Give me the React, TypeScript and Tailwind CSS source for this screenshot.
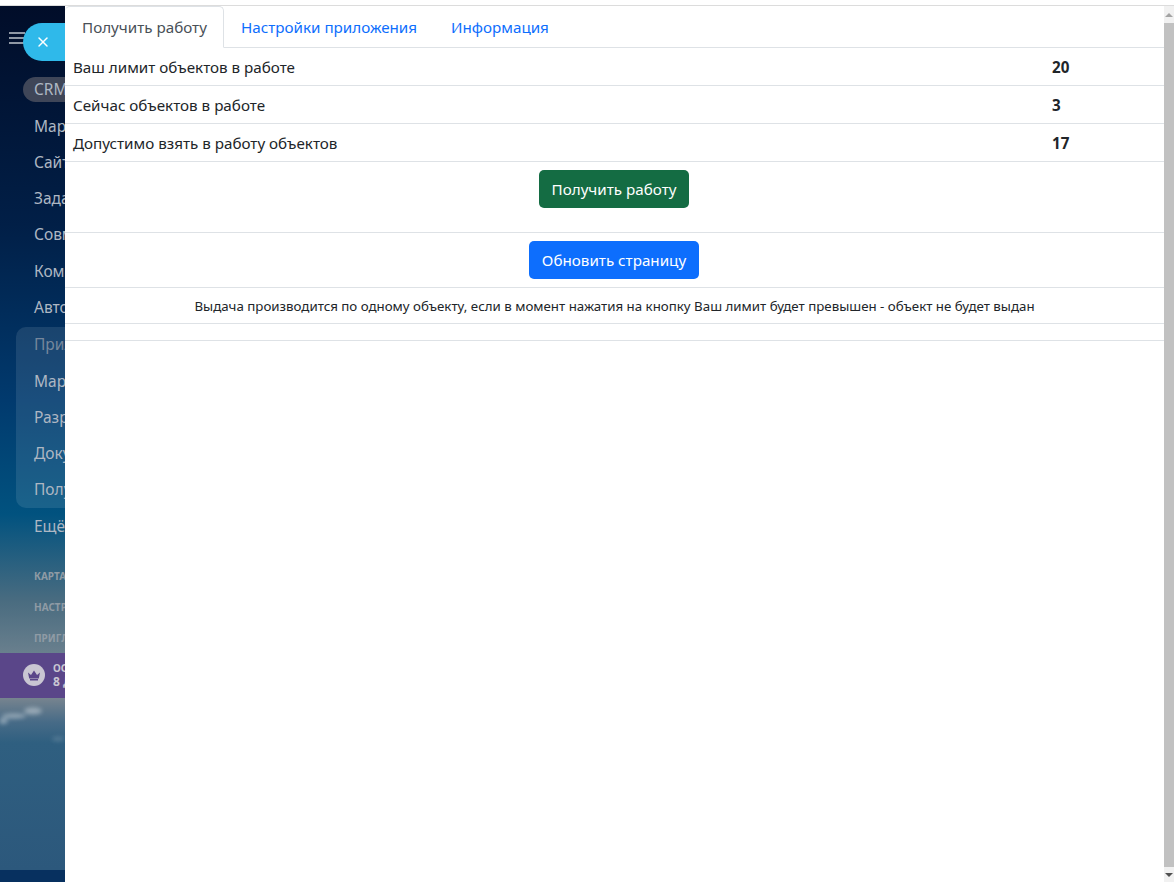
import React from "react";
import { X } from "lucide-react";

const font = "font-['Noto_Sans','Open_Sans',sans-serif]";

function NavItem({ label, muted }: { label: string; muted?: boolean }) {
  return (
    <div className={`h-[36.3px] flex items-center pl-[34px] text-[15.5px] whitespace-nowrap ${muted ? "text-[#76879c]" : "text-[#aeb7c3]"}`}>
      {label}
    </div>
  );
}

function Row({ label, value }: { label: string; value: string }) {
  return (
    <div className="h-[38px] flex items-center pt-px border-b border-[#dee2e6] text-[15.2px] text-[#212529]">
      <div className="w-[987px] pl-2">{label}</div>
      <div className="font-bold">{value}</div>
    </div>
  );
}

function Sidebar() {
  return (
    <aside className="relative w-[65px] shrink-0 overflow-hidden bg-[linear-gradient(180deg,#010d29_0%,#011f47_25%,#013a6e_45%,#01527f_58%,#4a6c80_68%,#6f8390_75%,#3c5f7f_85%,#2a5578_100%)] flex flex-col">
      <div className="h-[71px] shrink-0" />
      <div className="ml-[23px] h-[25px] w-[70px] rounded-full bg-[#3f4658] pl-[11px] flex items-center text-[15.5px] text-[#aeb7c3] shrink-0">CRM</div>
      <div className="mt-[6px] flex flex-col shrink-0">
        <NavItem label="Маркетинг" />
        <NavItem label="Сайты" />
        <NavItem label="Задачи" />
        <NavItem label="Совместная" />
        <NavItem label="Компания" />
        <NavItem label="Автоматизация" />
      </div>
      <div className="ml-4 mt-px w-[90px] rounded-[10px] bg-white/10 flex flex-col shrink-0">
        <div className="-ml-4">
          <NavItem label="Приложения" muted />
          <NavItem label="Маркет" />
          <NavItem label="Разработчикам" />
          <NavItem label="Документы" />
          <NavItem label="Получить" />
        </div>
      </div>
      <div className="shrink-0"><NavItem label="Ещё" /></div>
      <div className="mt-[26px] pl-[34px] flex flex-col gap-[21px] text-[10px] leading-[10px] font-bold text-[#8f9ba5] shrink-0 whitespace-nowrap">
        <div>КАРТА САЙТА</div>
        <div>НАСТРОИТЬ</div>
        <div>ПРИГЛАСИТЬ</div>
      </div>
      <div className="mt-[10px] h-[45px] shrink-0 bg-[#5a4689] flex items-center pl-[23px] gap-2">
        <div className="w-[22px] h-[22px] shrink-0 rounded-full bg-[#c9c6d2] flex items-center justify-center">
          <svg width="14" height="12" viewBox="0 0 14 12" fill="#5a4689">
            <path d="M1 3.500 4 6 7 1.500 10 6l3-2.500-1.200 6H2.200z" />
            <rect x="3" y="10" width="8" height="1.500" />
          </svg>
        </div>
        <div className="text-[10px] leading-[14px] font-bold text-[#c9c6d2] whitespace-nowrap">
          <div>ОСТАЛОСЬ</div>
          <div className="text-[12px]">8 ДНЕЙ</div>
        </div>
      </div>
      <div className="relative flex-1 bg-[linear-gradient(180deg,#77848f_0%,#476b87_14%,#2f5f80_26%,#2c587c_100%)]">
        <svg className="absolute left-0 top-0 blur-[2px]" width="65" height="90" viewBox="0 0 65 90">
          <g fill="#dfe6ea" opacity="0.45">
            <ellipse cx="33" cy="13" rx="9" ry="3.500" />
            <ellipse cx="14" cy="18" rx="12" ry="2.500" />
            <ellipse cx="3" cy="23" rx="5" ry="3" />
            <ellipse cx="58" cy="41" rx="6" ry="2.500" opacity="0.4" />
          </g>
        </svg>
      </div>
      <div className="h-3 shrink-0 bg-[#07305f]" />
    </aside>
  );
}

function Panel() {
  return (
    <main className="flex-1 min-w-0 bg-white">
      <div className="h-[42px] flex items-end border-b border-[#dee2e6] text-[15.2px]">
        <div className="relative -mb-px h-[42px] w-[159px] flex items-center pt-px pl-[17px] bg-white border border-[#dee2e6] border-b-white rounded-t-[5px] border-l-0 text-[#495057]">
          Получить работу
        </div>
        <div className="h-[41px] flex items-center pt-[2px] pl-[17px] text-[#0d6efd]">Настройки приложения</div>
        <div className="h-[41px] flex items-center pt-[2px] pl-[34px] text-[#0d6efd]">Информация</div>
      </div>
      <Row label="Ваш лимит объектов в работе" value="20" />
      <Row label="Сейчас объектов в работе" value="3" />
      <Row label="Допустимо взять в работу объектов" value="17" />
      <div className="h-[71px] flex justify-center pt-2 pr-px border-b border-[#dee2e6]">
        <button className="h-[38px] w-[150px] rounded-[5px] bg-[#146c43] text-white text-[15.2px]">Получить работу</button>
      </div>
      <div className="h-[55px] flex justify-center pt-2 pr-px border-b border-[#dee2e6]">
        <button className="h-[38px] w-[170px] rounded-[5px] bg-[#0d6efd] text-white text-[15.2px]">Обновить страницу</button>
      </div>
      <div className="h-[36px] flex items-center justify-center pt-[3px] border-b border-[#dee2e6] text-[13.3px] text-[#212529] whitespace-nowrap">
        Выдача производится по одному объекту, если в момент нажатия на кнопку Ваш лимит будет превышен - объект не будет выдан
      </div>
      <div className="h-[17px] border-b border-[#dee2e6]" />
    </main>
  );
}

function Scrollbar() {
  return (
    <div className="w-[10px] shrink-0 bg-[#f1f1f1] flex flex-col items-center">
      <div className="h-[17px] flex items-center justify-center">
        <div className="w-0 h-0 border-x-[4px] border-x-transparent border-b-[4px] border-b-[#a3a3a3]" />
      </div>
      <div className="flex-1 w-full bg-[#c1c1c1]" />
      <div className="h-[15px] flex items-center justify-center">
        <div className="w-0 h-0 border-x-[4px] border-x-transparent border-t-[4px] border-t-[#505050]" />
      </div>
    </div>
  );
}

export default function App() {
  return (
    <div className={`relative h-[882px] w-[1174px] overflow-hidden bg-white flex flex-col ${font}`}>
      <div className="h-[6px] shrink-0 border-b border-[#dcdcdc] bg-white" />
      <div className="flex-1 min-h-0 flex">
        <Sidebar />
        <Panel />
        <Scrollbar />
      </div>
      <div className="absolute left-[9px] top-[32px] w-[16px] flex flex-col gap-[3px]">
        <div className="h-[2px] bg-[#8f98a5]" />
        <div className="h-[2px] bg-[#8f98a5]" />
        <div className="h-[2px] bg-[#8f98a5]" />
      </div>
      <div className="absolute left-[23px] top-[23px] h-[38px] w-[42px] rounded-l-full bg-[#2fb9ea] flex items-center pl-[12px]">
        <X size={16} color="white" strokeWidth={2.2} />
      </div>
    </div>
  );
}
